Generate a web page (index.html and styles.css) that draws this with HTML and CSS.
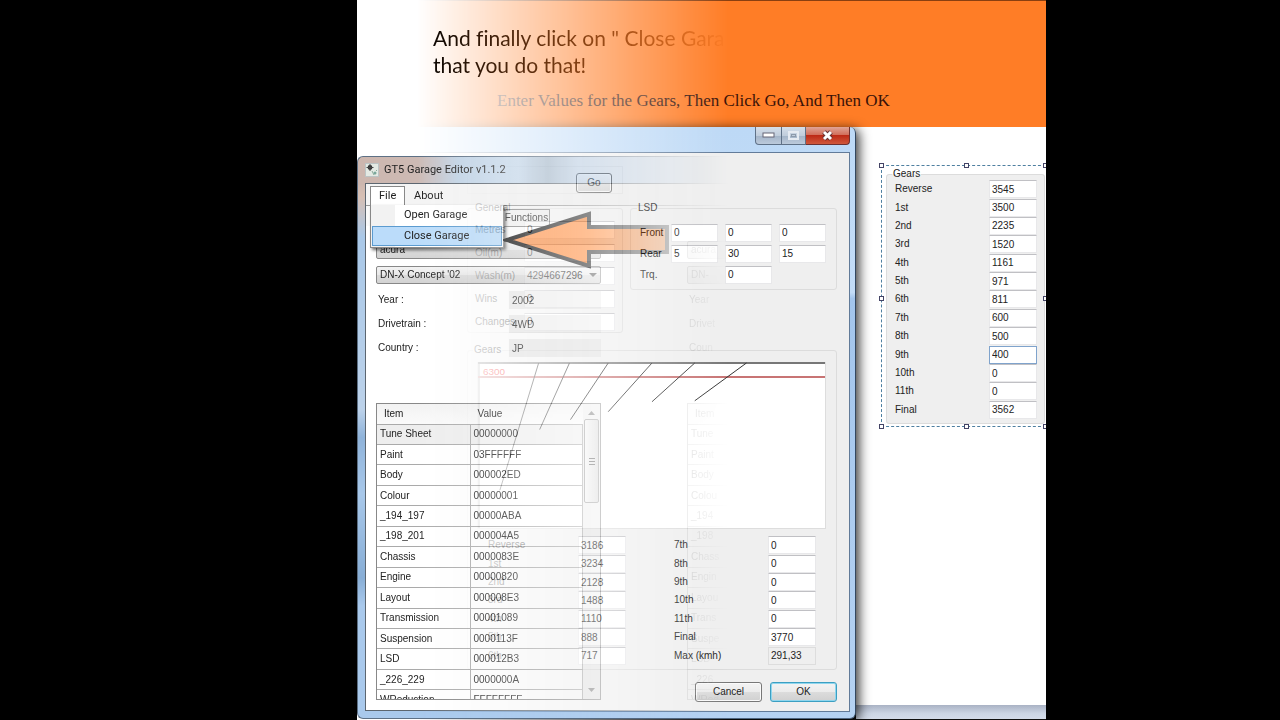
FILE: index.html
```html
<!DOCTYPE html>
<html lang="en">
<head>
<meta charset="utf-8">
<title>GT5 Garage Editor</title>
<link rel="stylesheet" href="styles.css">
</head>
<body>
<main class="stage">
  <section class="slide slide-gears">
    <header class="banner"><p>Enter Values for the Gears, Then Click Go, And Then OK</p></header>
    <div class="desk">
      <div class="window">
        <div class="caption">
          <button class="cap cap-min" aria-label="Minimize"><svg width="13" height="7"><rect x="1" y="1" width="11" height="4" fill="#fff" stroke="#667" /></svg></button>
          <button class="cap cap-max" aria-label="Maximize"><svg width="11" height="9"><rect x="1" y="1" width="9" height="7" fill="none" stroke="#e6ebf2" stroke-width="2"/><rect x="3.5" y="3.5" width="4" height="2" fill="none" stroke="#8d9aab"/></svg></button>
          <button class="cap cap-close" aria-label="Close"><svg width="13" height="11"><path d="M3 2l7 7M10 2l-7 7" stroke="#633" stroke-width="5"/><path d="M3 2l7 7M10 2l-7 7" stroke="#fff" stroke-width="3"/></svg></button>
        </div>
        <div class="client">
          <div class="gobox"><button class="btn go">Go</button></div>
          <div class="groups">
            <fieldset class="group general">
              <legend>General</legend>
              <label class="field"><span>Metres</span><input value="0"></label>
              <label class="field"><span>Oil(m)</span><input value="0"></label>
              <label class="field"><span>Wash(m)</span><input value="4294667296"></label>
              <label class="field"><span>Wins</span><input value="0"></label>
              <label class="field"><span>Changes</span><input value="0"></label>
            </fieldset>
            <fieldset class="group lsd">
              <legend>LSD</legend>
              <div class="lsd-grid">
                <span>Front</span><input aria-label="Front 1" value="0"><input aria-label="Front 2" value="0"><input aria-label="Front 3" value="0">
                <span>Rear</span><input aria-label="Rear 1" value="5"><input aria-label="Rear 2" value="30"><input aria-label="Rear 3" value="15">
                <span>Trq.</span><input class="trq" aria-label="Torque" value="0">
              </div>
            </fieldset>
          </div>
          <fieldset class="group gearbox">
            <legend>Gears</legend>
            <svg class="chart" viewBox="0 0 349 167" preserveAspectRatio="none">
              <rect width="349" height="167" fill="#fff"/>
              <path d="M0 1H349" stroke="#777" stroke-width="2"/>
              <path d="M1 0V167" stroke="#777" stroke-width="1"/>
              <path d="M0 15H349" stroke="#c87474" stroke-width="2"/>
              <text x="5" y="13" fill="#e00">6300</text>
              <path d="M61 1L22 129M92 1L62 68M131 1L93 58M175 1L131 50M218 1L175 40M270 1L218 39" stroke="#333" fill="none"/>
            </svg>
            <div class="ratios">
              <div class="rows seven">
                <label class="row"><span>Reverse</span><input value="3186"></label>
                <label class="row"><span>1st</span><input value="3234"></label>
                <label class="row"><span>2nd</span><input value="2128"></label>
                <label class="row"><span>3rd</span><input value="1488"></label>
                <label class="row"><span>4th</span><input value="1110"></label>
                <label class="row"><span>5th</span><input value="888"></label>
                <label class="row"><span>6th</span><input value="717"></label>
              </div>
              <div class="rows seven">
                <label class="row"><span>7th</span><input value="0"></label>
                <label class="row"><span>8th</span><input value="0"></label>
                <label class="row"><span>9th</span><input value="0"></label>
                <label class="row"><span>10th</span><input value="0"></label>
                <label class="row"><span>11th</span><input value="0"></label>
                <label class="row"><span>Final</span><input value="3770"></label>
                <label class="row"><span>Max (kmh)</span><input class="readonly" readonly value="291,33"></label>
              </div>
            </div>
          </fieldset>
          <div class="actions"><button class="btn">Cancel</button><button class="btn primary">OK</button></div>
        </div>
      </div>
      <div class="paper">
        <div class="selection">
          <i class="handle tl"></i><i class="handle tc"></i><i class="handle ml"></i><i class="handle bl"></i><i class="handle bc"></i><i class="handle tr"></i><i class="handle mr"></i><i class="handle br"></i>
          <fieldset class="group snippet">
            <legend>Gears</legend>
            <div class="rows thirteen">
              <label class="row"><span>Reverse</span><input value="3545"></label>
              <label class="row"><span>1st</span><input value="3500"></label>
              <label class="row"><span>2nd</span><input value="2235"></label>
              <label class="row"><span>3rd</span><input value="1520"></label>
              <label class="row"><span>4th</span><input value="1161"></label>
              <label class="row"><span>5th</span><input value="971"></label>
              <label class="row"><span>6th</span><input value="811"></label>
              <label class="row"><span>7th</span><input value="600"></label>
              <label class="row"><span>8th</span><input value="500"></label>
              <label class="row"><span>9th</span><input class="focus" value="400"></label>
              <label class="row"><span>10th</span><input value="0"></label>
              <label class="row"><span>11th</span><input value="0"></label>
              <label class="row"><span>Final</span><input value="3562"></label>
            </div>
          </fieldset>
        </div>
      </div>
    </div>
  </section>

  <section class="slide slide-close">
    <header class="note"><p>And finally click on " Close Gara<br>that you do that!</p></header>
    <div class="editor">
      <div class="titlebar">
        <svg class="appicon" width="14" height="14" viewBox="0 0 14 14"><rect x=".5" y=".5" width="13" height="13" fill="#e4eae4" stroke="#bcc4c4"/><circle cx="5" cy="4.500" r="2.400" fill="#333"/><path d="M5 1v7M1.500 4.500h7" stroke="#444"/><circle cx="10" cy="10" r="1.500" fill="#7aa79b"/><path d="M7 8l2 4M11 7l1 1" stroke="#8a9"/></svg>
        <span>GT5 Garage Editor v1.1.2</span>
      </div>
      <div class="body">
        <nav class="menubar">
          <button class="menu open">File</button><button class="menu">About</button>
          <div class="dropdown"><button>Open Garage</button><button class="hot">Close Garage</button></div>
        </nav>
        <div class="tabs"><button class="tab">Functions</button></div>
        <svg class="arrow" width="168" height="60" viewBox="0 0 168 60">
          <defs><linearGradient id="flame"><stop offset="0" stop-color="#fd9c5c"/><stop offset=".5" stop-color="#ff7414"/><stop offset="1" stop-color="#ff6a00"/></linearGradient></defs>
          <path d="M4 30L86 4V17H164V42H86V56Z" fill="url(#flame)" stroke="#111" stroke-width="4"/>
        </svg>
        <div class="page">
          <div class="car">
            <button class="combo">acura</button>
            <button class="combo drop">DN-X Concept '02</button>
            <div class="specs">
              <label class="field"><span>Year :</span><input readonly value="2002"></label>
              <label class="field"><span>Drivetrain :</span><input readonly value="4WD"></label>
              <label class="field"><span>Country :</span><input readonly value="JP"></label>
            </div>
            <div class="list">
              <table>
                <thead><tr><th>Item</th><th>Value</th></tr></thead>
                <tbody>
                  <tr class="sel"><td>Tune Sheet</td><td>00000000</td></tr>
                  <tr><td>Paint</td><td>03FFFFFF</td></tr>
                  <tr><td>Body</td><td>000002ED</td></tr>
                  <tr><td>Colour</td><td>00000001</td></tr>
                  <tr><td>_194_197</td><td>00000ABA</td></tr>
                  <tr><td>_198_201</td><td>000004A5</td></tr>
                  <tr><td>Chassis</td><td>0000083E</td></tr>
                  <tr><td>Engine</td><td>00000820</td></tr>
                  <tr><td>Layout</td><td>000008E3</td></tr>
                  <tr><td>Transmission</td><td>00001089</td></tr>
                  <tr><td>Suspension</td><td>0000113F</td></tr>
                  <tr><td>LSD</td><td>000012B3</td></tr>
                  <tr><td>_226_229</td><td>0000000A</td></tr>
                  <tr><td>WReduction</td><td>FFFFFFFF</td></tr>
                </tbody>
              </table>
              <div class="scroll">
                <svg width="7" height="5"><path d="M0 5L3.500 1L7 5Z" fill="#777"/></svg>
                <div class="thumb"><svg width="6" height="8"><path d="M0 1.500H6M0 4.500H6M0 7.500H6" stroke="#555"/></svg></div>
                <svg width="7" height="5"><path d="M0 0L3.500 4L7 0Z" fill="#777"/></svg>
              </div>
            </div>
          </div>
          <div class="car second">
            <button class="combo">acura</button>
            <button class="combo">DN-</button>
            <div class="specs">
              <div class="field">Year</div>
              <div class="field">Drivet</div>
              <div class="field">Coun</div>
            </div>
            <div class="list">
              <table>
                <thead><tr><th>Item</th></tr></thead>
                <tbody>
                  <tr><td>Tune</td></tr><tr><td>Paint</td></tr><tr><td>Body</td></tr><tr><td>Colou</td></tr><tr><td>_194</td></tr><tr><td>_198</td></tr><tr><td>Chass</td></tr><tr><td>Engin</td></tr><tr><td>Layou</td></tr><tr><td>Trans</td></tr><tr><td>Suspe</td></tr><tr><td>LSD</td></tr><tr><td>_226</td></tr><tr><td>WRed</td></tr>
                </tbody>
              </table>
            </div>
          </div>
        </div>
      </div>
    </div>
  </section>
</main>
</body>
</html>
```

FILE: styles.css
```css
* { box-sizing: border-box; }
body { margin: 0; background: #000; font: 10px/12px "Liberation Sans", Arial, sans-serif; color: #222; }
button, input { font: inherit; color: inherit; margin: 0; }
p { margin: 0; }

.stage { display: grid; height: 100vh; min-height: 720px; margin: 0 234px 0 357px; overflow: hidden; }
.slide { grid-area: 1 / 1; display: flex; flex-direction: column; min-width: 0; min-height: 0; overflow: hidden; }

/* gears slide */
.slide-gears { background: #111; }
.banner { height: 127px; padding: 90px 0 0 140px; background: #ff7d26; border-top: 1px solid #8a3f10; font: 17px/20px "Liberation Serif", serif; color: #3a1208; white-space: nowrap; }
.desk { flex: 1; display: flex; min-height: 0; padding-bottom: 1px; background: linear-gradient(#fff 90%, #111 99%); }
.window { width: 499px; display: flex; flex-direction: column; padding: 0 5px 6px 8px; background: linear-gradient(#bdd9f6, #c3dcf7 28%, #a3c5ec 29%, #b5d2f2); border-right: 1px solid #33475f; border-bottom: 1px solid #4e6580; border-radius: 0 6px 6px 0; box-shadow: 3px 2px 12px #000c; z-index: 1; }
.caption { display: flex; justify-content: flex-end; height: 26px; }
.cap { height: 18px; padding: 0; display: grid; place-items: center; border: 1px solid #5f7187; border-top: 0; background: linear-gradient(#d5dfea, #c0cddc 50%, #a3b4c8 51%, #bccadb); }
.cap-min { width: 27px; border-radius: 0 0 0 4px; }
.cap-max { width: 24px; border-left: 0; }
.cap-close { width: 44px; border-left: 0; border-radius: 0 0 4px 0; background: linear-gradient(#e0a496, #d2705c 45%, #bd2a16 50%, #d0583c); border-color: #6e3030; }
.client { flex: 1; display: flex; flex-direction: column; padding: 13px 12px 9px 102px; background: #efefef; border: 1px solid #627b99; border-left: 0; }

.gobox { width: 156px; height: 28px; padding: 6px 10px 0 0; text-align: right; border: 1px solid #e4e4e4; }
.btn { width: 67px; height: 20px; padding: 0; border: 1px solid #777; border-radius: 3px; background: linear-gradient(#f3f3f3, #ebebeb 50%, #dcdcdc 51%, #d0d0d0); box-shadow: inset 0 0 0 1px #fafafa; }
.btn.go { width: 36px; border-color: #555; }
.btn.primary { border-color: #3c9fc2; box-shadow: inset 0 0 0 1px #8fd6ee; }
.groups { display: flex; align-items: flex-start; gap: 7px; margin-top: 8px; }
.group { min-width: 0; margin: 0; padding: 0; border: 1px solid #dcdcdc; border-radius: 3px; }
.group legend { margin-left: 6px; padding: 0 1px; line-height: 12px; }
.group input { width: 48px; min-width: 0; height: 18px; padding: 0 2px; background: #fff; border: 1px solid #e8e8ea; border-top-color: #c0c0c4; }
.general { width: 156px; padding: 4px 7px 0 7px; height: 131px; }
.general legend { margin-left: -1px; }
.general .field { display: flex; align-items: center; justify-content: space-between; height: 23px; }
.general input { width: 91px; }
.lsd { flex: 1; height: 88px; padding: 8px 10px 0 9px; }
.lsd legend { margin-left: -3px; }
.lsd-grid { display: grid; grid-template-columns: 24px 1fr 1fr 1fr; grid-auto-rows: 21px; gap: 0 7px; align-items: center; }
.lsd-grid input { width: 100%; }
.lsd-grid .trq { grid-column: 3; }
.gearbox { height: 326px; margin-top: 11px; padding: 6px 10px 0 9px; }
.gearbox legend { margin-left: -4px; }
.chart { display: block; width: 100%; height: 167px; border: 1px solid #ddd; border-top: 0; }
.ratios { display: grid; grid-template-columns: 138px 142px; gap: 48px; padding: 7px 0 0 11px; }
.rows { display: grid; grid-auto-rows: 1fr; }
.seven { height: 129px; }
.thirteen { height: 239px; }
.row { display: flex; align-items: center; justify-content: space-between; min-height: 0; }
.group .readonly { background: #efefef; border-color: #ddd; }
.group .focus { border-color: #7fa3cc; }
.actions { display: flex; justify-content: flex-end; gap: 8px; margin-top: 12px; }

.paper { flex: 1; min-width: 0; padding: 38px 0 0 25px; background: linear-gradient(#a9b2c4, #ccd5e4 60%, #d4dcea) bottom / 100% 14px no-repeat, #fff; }
.selection { position: relative; height: 262px; padding: 2px 0 2px 4px; border: 1px dashed #4e7fa0; border-right-color: transparent; }
.snippet { height: 256px; padding: 0 7px 0 8px; background: #efefef; margin-right: 0; }
.snippet legend { margin-left: -3px; }
.handle { position: absolute; width: 5px; height: 5px; background: #fff; border: 1px solid #446; }
.tl, .tc, .tr { top: -3px; }
.bl, .bc, .br { bottom: -3px; }
.ml, .mr { top: 50%; }
.tl, .ml, .bl { left: -3px; }
.tc, .bc { left: 50%; }
.tr, .mr, .br { right: -3px; }

/* incoming slide, wiped in from the left */
.slide-close { z-index: 2; background: #fff; -webkit-mask-image: linear-gradient(90deg, #000 60px, transparent 372px); mask-image: linear-gradient(90deg, #000 60px, transparent 372px); }
.note { height: 156px; padding: 24px 0 0 76px; font: 21px/27px Lato, "Open Sans", sans-serif; font-variant-ligatures: none; color: #000; white-space: nowrap; }
.editor { flex: 1; min-height: 0; display: flex; flex-direction: column; padding: 0 0 7px 7px; margin-bottom: 1px; border: 1px solid #5d7085; border-width: 1px 0 1px 1px; border-radius: 6px 0 0 6px; background: linear-gradient(90deg, #ccb6ae, #cdbab4 60px, #c0d3e6 100px, #c9dcef 160px, #a9bdd0 190px, #bdd3ec 220px, #bdd4ee 320px, #9fb4ca 350px, #c6daf0 372px) top / 100% 28px no-repeat, linear-gradient(#c9b3ab 20px, #d6bfb4 40px, #a9c8e8 80px, #bcd2ea 45%, #8fb3da 50%, #a8c8ea 60%, #88aed6 75%, #a9c9ec 80%); }
.titlebar { display: flex; align-items: center; gap: 5px; height: 26px; font: 11px/14px Roboto, sans-serif; }
.body { position: relative; flex: 1; min-height: 0; display: flex; flex-direction: column; background: #fff; border: 1px solid #5c6670; border-right: 0; }
.menubar { position: relative; display: flex; height: 21px; padding: 2px 0 0 4px; gap: 1px; background: #f4f4f4; font: 11px/14px Roboto, sans-serif; }
.menu { padding: 0 8px; border: 0; background: none; }
.menu.open { width: 35px; background: #fff; border: 1px solid #888; border-bottom: 0; }
.dropdown { position: absolute; z-index: 3; top: 21px; left: 4px; width: 134px; height: 43px; padding: 0 1px 1px; display: flex; flex-direction: column; background: linear-gradient(90deg, #f2f2f2 24px, #fff 24px); border: 1px solid #888; border-top: 0; box-shadow: 2px 2px 3px #0009; }
.dropdown button { flex: 1; padding: 0 0 0 31px; text-align: left; border: 1px solid transparent; background: none; }
.dropdown .hot { background: #bbdcfa; border-color: #5b9bd0; }
.tabs { height: 21px; padding: 3px 0 0 137px; border-top: 1px solid #999; background: #f9f9f9; }
.tab { width: 47px; height: 18px; padding: 0; border: 1px solid #888; background: #f4f4f4; }
.arrow { position: absolute; left: 137px; top: 26px; z-index: 4; }
.page { flex: 1; min-height: 0; display: flex; gap: 86px; padding: 15px 0 10px 10px; }
.car { width: 225px; flex: none; display: flex; flex-direction: column; }
.combo { flex: none; height: 18px; margin-bottom: 7px; padding: 0 3px; text-align: left; border: 1px solid #888; border-radius: 2px; background: linear-gradient(#f3f3f3, #e8e8e8 50%, #dadada 51%, #d3d3d3); }
.drop { background: conic-gradient(from -45deg at 50% 100%, #555 90deg, transparent 0) right 3px center / 8px 4px no-repeat, linear-gradient(#f3f3f3, #e8e8e8 50%, #dadada 51%, #d3d3d3); background: linear-gradient(#f3f3f3, #e8e8e8 50%, #dadada 51%, #d3d3d3); display: flex; align-items: center; justify-content: space-between; margin-bottom: 4px; }
.drop::after { content: ""; border: 4px solid transparent; border-top-color: #444; border-bottom: 0; }
.specs .field { display: flex; align-items: center; justify-content: space-between; height: 24px; padding-left: 2px; }
.specs input { width: 92px; height: 18px; padding: 0 2px; background: #ececec; border: 1px solid #ececec; }
.list { flex: 1; min-height: 0; display: flex; margin-top: 43px; border: 1px solid #888; overflow: hidden; }
table { flex: 1; height: 307px; border-collapse: collapse; }
th, td { height: 20px; padding: 0 3px; text-align: left; font-weight: 400; border-bottom: 1px solid #aaa; border-right: 1px solid #aaa; white-space: nowrap; }
th { border-right-color: transparent; background: linear-gradient(#f2f2f2, #fafafa); padding-left: 7px; }
th:first-child { width: 93px; }
.sel { background: #eee; }
.scroll { width: 17px; display: flex; flex-direction: column; align-items: center; justify-content: space-between; padding: 6px 1px; background: #eee; }
.thumb { flex: none; width: 15px; height: 84px; margin: 4px 0 auto; display: grid; place-items: center; border: 1px solid #999; border-radius: 2px; background: linear-gradient(90deg, #f3f3f3, #d6d6d6); }
.second { color: #444; }
.second .combo.combo { margin-bottom: 7px; }
.second .specs { margin-top: -3px; }
.second .list { border-right: 0; }
```
